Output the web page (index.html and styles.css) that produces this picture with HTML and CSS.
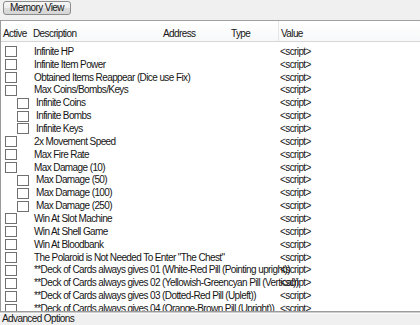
FILE: index.html
```html
<!DOCTYPE html>
<html>
<head>
<meta charset="utf-8">
<link rel="stylesheet" href="styles.css">
</head>
<body>
<div class="app">
  <div class="toolbar">
    <button class="btn">Memory View</button>
  </div>
  <div class="list">
    <div class="header">
      <span>Active</span><span>Description</span><span>Address</span><span>Type</span><span class="hv">Value</span>
    </div>
    <div class="rows">
      <div class="row"><span class="cb"></span><span class="d">Infinite HP</span><span class="v">&lt;script&gt;</span></div>
      <div class="row"><span class="cb"></span><span class="d">Infinite Item Power</span><span class="v">&lt;script&gt;</span></div>
      <div class="row"><span class="cb"></span><span class="d">Obtained Items Reappear (Dice use Fix)</span><span class="v">&lt;script&gt;</span></div>
      <div class="row"><span class="cb"></span><span class="d">Max Coins/Bombs/Keys</span><span class="v">&lt;script&gt;</span></div>
      <div class="row sub"><span class="cb"></span><span class="d">Infinite Coins</span><span class="v">&lt;script&gt;</span></div>
      <div class="row sub"><span class="cb"></span><span class="d">Infinite Bombs</span><span class="v">&lt;script&gt;</span></div>
      <div class="row sub"><span class="cb"></span><span class="d">Infinite Keys</span><span class="v">&lt;script&gt;</span></div>
      <div class="row"><span class="cb"></span><span class="d">2x Movement Speed</span><span class="v">&lt;script&gt;</span></div>
      <div class="row"><span class="cb"></span><span class="d">Max Fire Rate</span><span class="v">&lt;script&gt;</span></div>
      <div class="row"><span class="cb"></span><span class="d">Max Damage (10)</span><span class="v">&lt;script&gt;</span></div>
      <div class="row sub"><span class="cb"></span><span class="d">Max Damage (50)</span><span class="v">&lt;script&gt;</span></div>
      <div class="row sub"><span class="cb"></span><span class="d">Max Damage (100)</span><span class="v">&lt;script&gt;</span></div>
      <div class="row sub"><span class="cb"></span><span class="d">Max Damage (250)</span><span class="v">&lt;script&gt;</span></div>
      <div class="row"><span class="cb"></span><span class="d">Win At Slot Machine</span><span class="v">&lt;script&gt;</span></div>
      <div class="row"><span class="cb"></span><span class="d">Win At Shell Game</span><span class="v">&lt;script&gt;</span></div>
      <div class="row"><span class="cb"></span><span class="d">Win At Bloodbank</span><span class="v">&lt;script&gt;</span></div>
      <div class="row"><span class="cb"></span><span class="d">The Polaroid is Not Needed To Enter "The Chest"</span><span class="v">&lt;script&gt;</span></div>
      <div class="row"><span class="cb"></span><span class="d">**Deck of Cards always gives 01 (White-Red Pill (Pointing upright))</span><span class="v">&lt;script&gt;</span></div>
      <div class="row"><span class="cb"></span><span class="d">**Deck of Cards always gives 02 (Yellowish-Greencyan Pill (Vertical))</span><span class="v">&lt;script&gt;</span></div>
      <div class="row"><span class="cb"></span><span class="d">**Deck of Cards always gives 03 (Dotted-Red Pill (Upleft))</span><span class="v">&lt;script&gt;</span></div>
      <div class="row"><span class="cb"></span><span class="d">**Deck of Cards always gives 04 (Orange-Brown Pill (Upright))</span><span class="v">&lt;script&gt;</span></div>
    </div>
  </div>
  <div class="status">Advanced Options</div>
</div>
</body>
</html>
```

FILE: styles.css
```css
html, body {
  margin: 0;
  padding: 0;
  background: #f0f0f0;
}
body {
  font-family: "Liberation Sans", Arial, sans-serif;
  font-size: 10px;
  letter-spacing: -0.6px;
  color: #151515;
}
.app {
  width: 420px;
  height: 325px;
  display: flex;
  flex-direction: column;
  overflow: hidden;
}
.toolbar {
  height: 20px;
  flex: none;
  padding: 1px 0 0 3px;
  box-sizing: border-box;
}
.btn {
  display: block;
  width: 68px;
  height: 14px;
  padding: 0;
  margin: 0;
  font: inherit;
  letter-spacing: inherit;
  white-space: nowrap;
  color: #151515;
  line-height: 12px;
  border: 1px solid #8c8c8c;
  border-radius: 3px;
  background: linear-gradient(#f6f6f6 0%, #ececec 50%, #dcdcdc 51%, #d6d6d6 100%);
}
.list {
  height: 292px;
  flex: none;
  background: #fff;
  border-top: 1px solid #a0a0a0;
  border-left: 1px solid #9a9a9a;
  border-bottom: 1px solid #9c9c9c;
  box-shadow: 0 1px 0 #cdcdcd, 0 2px 0 #fbfbfb;
  overflow: hidden;
  box-sizing: border-box;
}
.header {
  height: 21px;
  display: grid;
  grid-template-columns: 30px 130px 68px 47px 1fr;
  align-items: center;
  padding-left: 2px;
  background: linear-gradient(#ffffff, #f7f8f9);
  border-bottom: 1px solid #d6d6d6;
  box-sizing: border-box;
}
.header span {
  white-space: nowrap;
  height: 20px;
  line-height: 26px;
}
.header .hv {
  border-left: 1px solid #e6e6e6;
  padding-left: 2px;
}
.rows {
  padding-top: 3.4px;
}
.row {
  height: 12.87px;
  display: grid;
  grid-template-columns: 30px 248px 1fr;
  align-items: center;
}
.cb {
  width: 10px;
  height: 9px;
  border: 1px solid #707070;
  background: #fff;
  margin-left: 4px;
  box-sizing: content-box;
}
.sub .cb {
  margin-left: 16px;
}
.d {
  white-space: nowrap;
  padding-left: 3px;
  line-height: 12px;
  overflow: visible;
  width: 0;
}
.sub .d {
  padding-left: 5px;
}
.v {
  white-space: nowrap;
  line-height: 12px;
  padding-left: 1px;
}
.status {
  flex: 1;
  padding: 0 0 0 2px;
  line-height: 13px;
}
```
